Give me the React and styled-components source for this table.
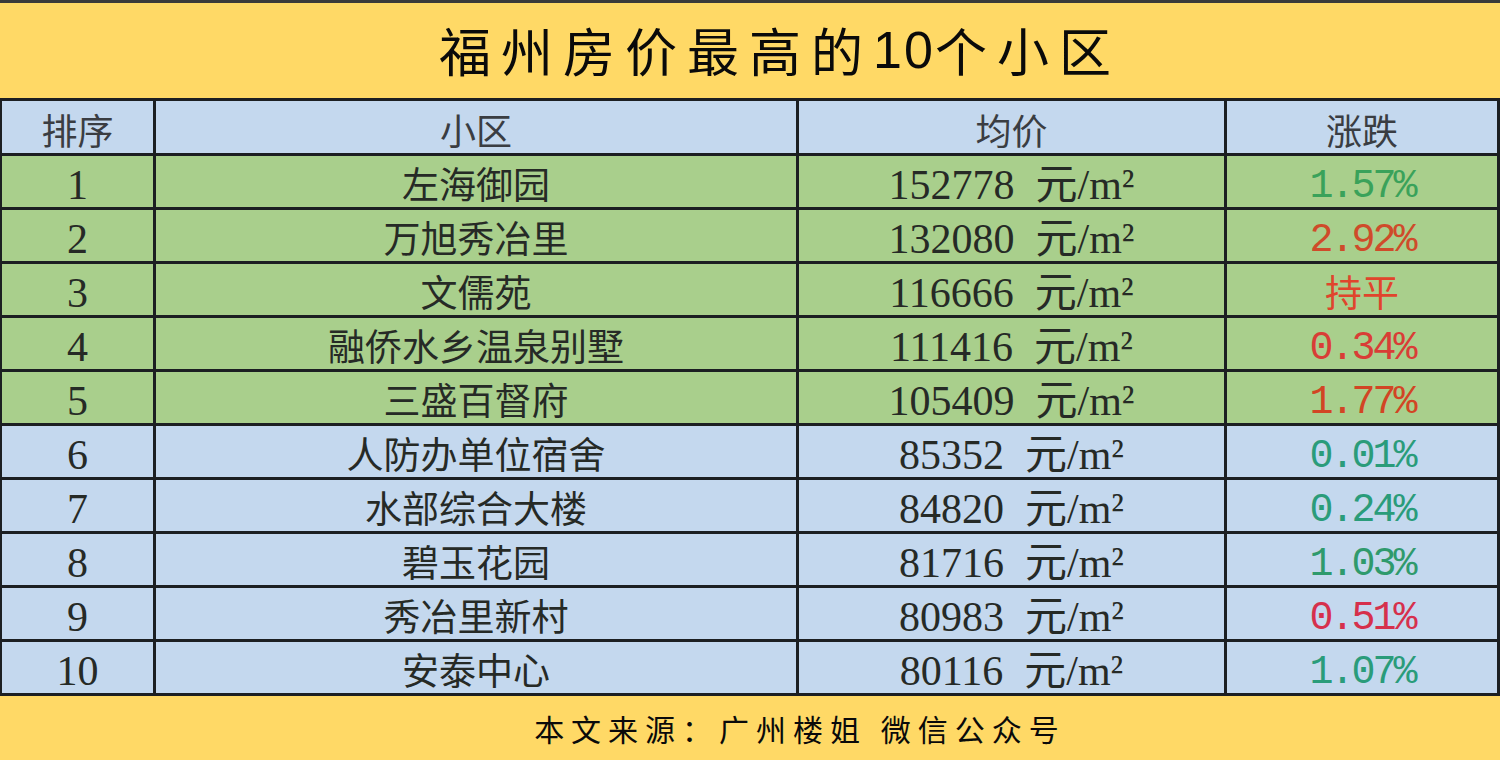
import React from "react";
import styled, { createGlobalStyle } from "styled-components";

const Global = createGlobalStyle`
  html, body { margin: 0; padding: 0; background: #FFD966; }
  body { width: 1500px; height: 760px; overflow: hidden; }
`;

const Page = styled.div`
  width: 1500px;
  height: 760px;
  display: flex;
  flex-direction: column;
  background: #FFD966;
`;

const Banner = styled.header`
  height: 98px;
  box-sizing: border-box;
  border-top: 3px solid #3a3a3a;
  background: #FFD966;
  display: flex;
  align-items: center;
  justify-content: center;
  font-family: "Noto Sans CJK SC", sans-serif;
  font-size: 52px;
  letter-spacing: 10px;
  color: #0a0a0a;
  padding-left: 60px;
  padding-bottom: 2px;
`;

const Num = styled.span`
  font-family: "Liberation Sans", sans-serif;
  letter-spacing: 2px;
`;

const Grid = styled.div`
  display: grid;
  grid-template-columns: 151px 640px 425px 270px;
  grid-template-rows: 52px repeat(10, 51px);
  gap: 3px;
  padding: 3px 3px 3px 2px;
  width: 1500px;
  box-sizing: border-box;
  background: #1c1f22;
`;

const Cell = styled.div`
  background: ${(p) => (p.$tone === "green" ? "#A9CF8C" : "#C4D8EE")};
  display: flex;
  align-items: center;
  justify-content: center;
  font-family: "Noto Sans CJK SC", sans-serif;
  font-size: 37px;
  color: ${(p) => p.$color || "#262a26"};
  line-height: 1;
  padding-top: 3px;
`;

const HeadCell = styled(Cell)`
  color: #3a3d42;
  font-size: 36px;
`;

const Serif = styled.span`
  font-family: "Liberation Serif", "Noto Sans CJK SC", serif;
  font-size: 42px;
  white-space: pre;
  padding-top: 3px;
`;

const Mono = styled.span`
  font-family: "Liberation Mono", "Noto Sans CJK SC", monospace;
  font-size: 40px;
  letter-spacing: -3px;
  padding-top: 8px;
`;

const Footer = styled.footer`
  flex: 1;
  display: flex;
  align-items: center;
  justify-content: center;
  padding-left: 100px;
  font-family: "Noto Sans CJK SC", sans-serif;
  font-size: 30px;
  letter-spacing: 7px;
  color: #0a0a0a;
`;

const rows = [
  { name: "左海御园", price: "152778", change: "1.57%", color: "#3aa25a", tone: "green" },
  { name: "万旭秀冶里", price: "132080", change: "2.92%", color: "#cf4b2a", tone: "green" },
  { name: "文儒苑", price: "116666", change: "持平", color: "#e0452c", tone: "green" },
  { name: "融侨水乡温泉别墅", price: "111416", change: "0.34%", color: "#d93d36", tone: "green" },
  { name: "三盛百督府", price: "105409", change: "1.77%", color: "#d24524", tone: "green" },
  { name: "人防办单位宿舍", price: "85352", change: "0.01%", color: "#2a9c7a", tone: "blue" },
  { name: "水部综合大楼", price: "84820", change: "0.24%", color: "#2a9c7a", tone: "blue" },
  { name: "碧玉花园", price: "81716", change: "1.03%", color: "#2f9a6c", tone: "blue" },
  { name: "秀冶里新村", price: "80983", change: "0.51%", color: "#d6304c", tone: "blue" },
  { name: "安泰中心", price: "80116", change: "1.07%", color: "#2a9c7a", tone: "blue" },
];

export default function App() {
  return (
    <Page>
      <Global />
      <Banner>
        福州房价最高的<Num>10</Num>个小区
      </Banner>
      <Grid>
        <HeadCell>排序</HeadCell>
        <HeadCell>小区</HeadCell>
        <HeadCell>均价</HeadCell>
        <HeadCell>涨跌</HeadCell>
        {rows.map((r, i) => (
          <React.Fragment key={i}>
            <Cell $tone={r.tone}>
              <Serif>{i + 1}</Serif>
            </Cell>
            <Cell $tone={r.tone}>{r.name}</Cell>
            <Cell $tone={r.tone}>
              <Serif>{r.price + "  元/m²"}</Serif>
            </Cell>
            <Cell $tone={r.tone} $color={r.color}>
              {r.change === "持平" ? r.change : <Mono>{r.change}</Mono>}
            </Cell>
          </React.Fragment>
        ))}
      </Grid>
      <Footer>本文来源：广州楼姐 微信公众号</Footer>
    </Page>
  );
}
